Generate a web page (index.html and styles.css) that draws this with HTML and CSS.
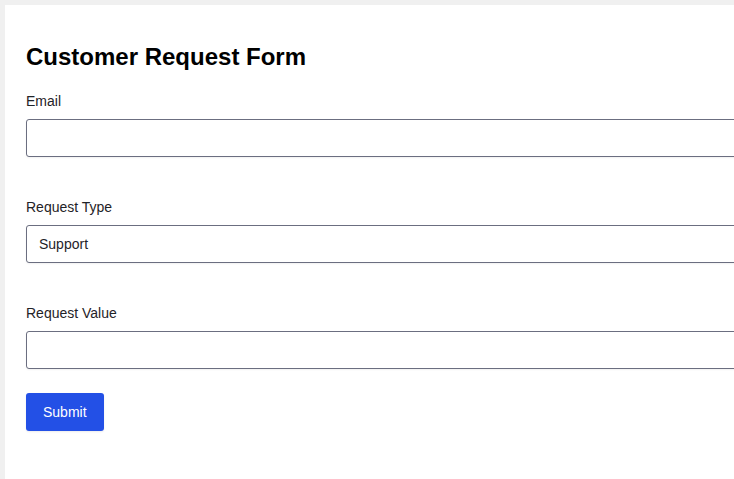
FILE: index.html
```html
<!DOCTYPE html>
<html lang="en">
<head>
    <meta charset="UTF-8">
    <meta name="viewport" content="width=device-width, initial-scale=1.0">
    <title>Customer Request Form</title>
    <link rel="stylesheet" href="styles.css">
</head>
<body>
    <div class="page">
        <div class="card">
            <h2 class="title">Customer Request Form</h2>
            <form class="request-form" onsubmit="return false;">
                <div class="field">
                    <label for="email">Email</label>
                    <input type="email" id="email" name="email">
                </div>
                <div class="field">
                    <label for="request-type">Request Type</label>
                    <select id="request-type" name="requestType">
                        <option>Support</option>
                        <option>Sales</option>
                        <option>Billing</option>
                    </select>
                </div>
                <div class="field">
                    <label for="request-value">Request Value</label>
                    <input type="text" id="request-value" name="requestValue">
                </div>
                <button type="submit" class="submit">Submit</button>
            </form>
        </div>
    </div>
</body>
</html>
```

FILE: styles.css
```css
html, body {
  margin: 0;
  overflow: hidden;
}

body {
  background-color: #f0f0f0;
  font-family: 'Liberation Sans', Arial, sans-serif;
  color: #1f2328;
}

.page {
  padding: 5px 0 0 5px;
}

/* card is wider than the window, its right edge is cut off */
.card {
  background-color: #ffffff;
  width: 1000px;
  min-height: calc(100vh - 5px);
  padding: 19px 21px 20px;
  box-sizing: border-box;
}

.title {
  font-size: 24px;
  font-weight: bold;
  color: #000;
  margin: 19px 0 19px;
}

.field + .field {
  margin-top: 39px;
}

.field label {
  display: block;
  font-size: 14px;
  line-height: 21px;
  padding-top: 1px;
  margin-bottom: 7px;
}

.field input,
.field select {
  display: block;
  width: 100%;
  height: 38px;
  box-sizing: border-box;
  margin: 0;
  padding: 0 12px;
  border: 1px solid #6b6e80;
  border-radius: 3px;
  background-color: #fff;
  font-family: inherit;
  font-size: 14px;
  color: #1f2328;
  box-shadow: 0 1px 2px rgba(0, 0, 0, 0.06);
  appearance: none;
  -webkit-appearance: none;
}

.submit {
  display: block;
  height: 38px;
  margin-top: 24px;
  padding: 0 17px;
  border: none;
  border-radius: 3px;
  background-color: #2350e6;
  color: #fff;
  font-family: inherit;
  font-size: 14px;
  cursor: pointer;
  box-shadow: 0 1px 2px rgba(0, 0, 0, 0.08);
}
```
